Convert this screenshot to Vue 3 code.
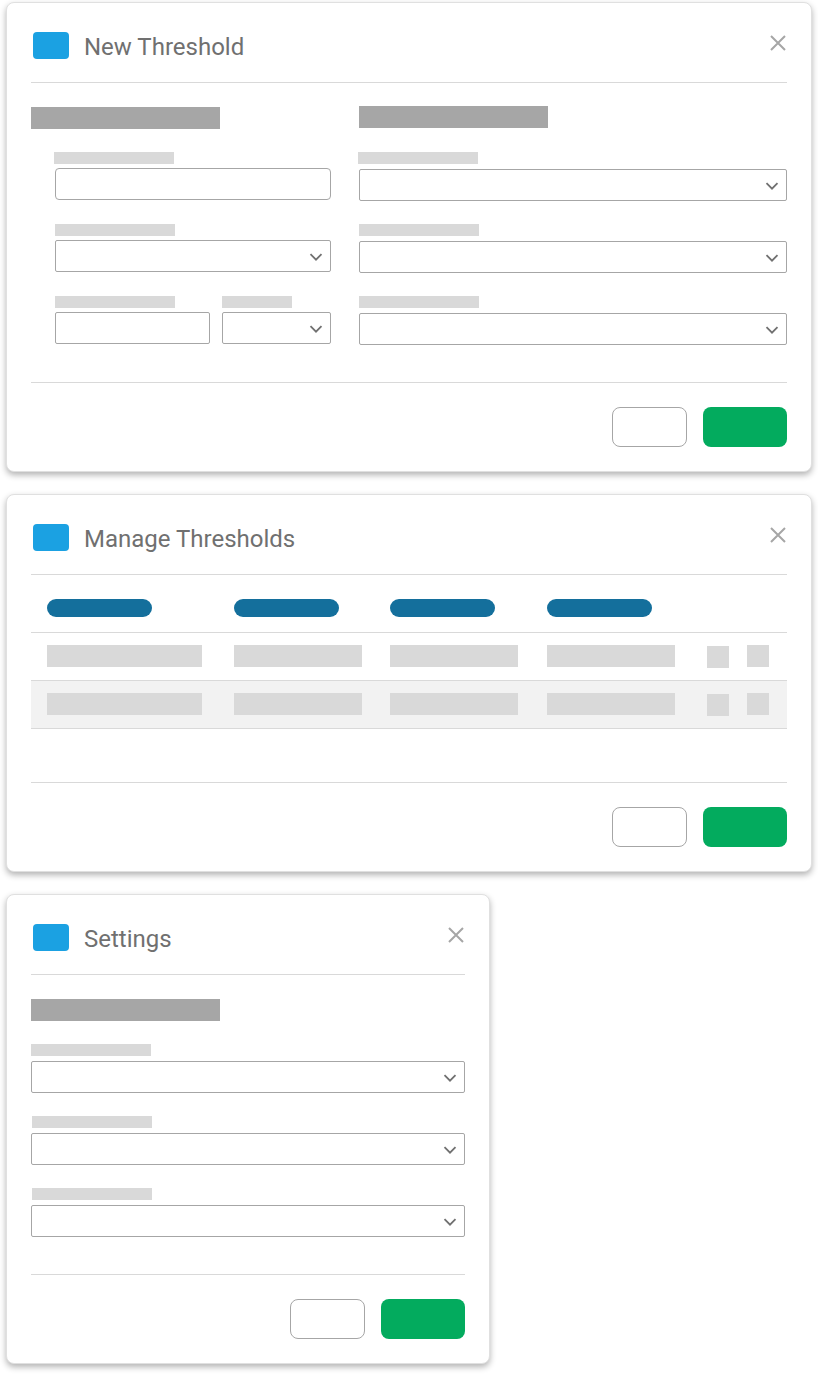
<script setup>
const columns = [
  { id: 'name', cell: 155 },
  { id: 'metric', cell: 128 },
  { id: 'limit', cell: 128 },
  { id: 'state', cell: 128 }
]
const rows = ['first', 'second']
const settingsFields = ['a', 'b', 'c']
const rightFields = ['a', 'b', 'c']
</script>

<template>
  <main class="page">
    <!-- new threshold -->
    <section class="card">
      <header class="head">
        <span class="logo"></span>
        <h2>New Threshold</h2>
        <svg class="close" width="16" height="16" viewBox="0 0 16 16"><path d="M1 1l14 14M15 1L1 15" /></svg>
      </header>

      <div class="form-body">
        <div class="col-left">
          <div class="heading"></div>
          <div class="left-fields">
            <div class="field">
              <div class="label shift"></div>
              <input class="box round" type="text">
            </div>
            <div class="field">
              <div class="label"></div>
              <div class="box select">
                <svg class="chev" width="14" height="8" viewBox="0 0 14 8"><path d="M1.5 1.2L7 6.7l5.5-5.5" /></svg>
              </div>
            </div>
            <div class="split">
              <div class="field grow">
                <div class="label"></div>
                <input class="box" type="text">
              </div>
              <div class="field small">
                <div class="label short"></div>
                <div class="box select">
                  <svg class="chev" width="14" height="8" viewBox="0 0 14 8"><path d="M1.5 1.2L7 6.7l5.5-5.5" /></svg>
                </div>
              </div>
            </div>
          </div>
        </div>

        <div class="col-right">
          <div class="heading"></div>
          <div v-for="(f, i) in rightFields" :key="f" class="wide-field">
            <div class="label" :class="{ shift: i === 0 }"></div>
            <div class="box select">
              <svg class="chev" width="14" height="8" viewBox="0 0 14 8"><path d="M1.5 1.2L7 6.7l5.5-5.5" /></svg>
            </div>
          </div>
        </div>
      </div>

      <footer class="foot">
        <button class="btn cancel"></button>
        <button class="btn ok"></button>
      </footer>
    </section>

    <!-- manage thresholds -->
    <section class="card">
      <header class="head">
        <span class="logo"></span>
        <h2>Manage Thresholds</h2>
        <svg class="close" width="16" height="16" viewBox="0 0 16 16"><path d="M1 1l14 14M15 1L1 15" /></svg>
      </header>

      <div class="table">
        <div class="tr th">
          <span v-for="c in columns" :key="c.id" class="pill"></span>
        </div>
        <div v-for="r in rows" :key="r" class="tr">
          <span v-for="c in columns" :key="c.id" class="cell" :style="{ width: c.cell + 'px' }"></span>
          <span class="sq low"></span>
          <span class="sq"></span>
        </div>
      </div>

      <footer class="foot">
        <button class="btn cancel"></button>
        <button class="btn ok"></button>
      </footer>
    </section>

    <!-- settings -->
    <section class="card narrow">
      <header class="head">
        <span class="logo"></span>
        <h2>Settings</h2>
        <svg class="close" width="16" height="16" viewBox="0 0 16 16"><path d="M1 1l14 14M15 1L1 15" /></svg>
      </header>

      <div class="settings-body">
        <div class="heading"></div>
        <div v-for="(f, i) in settingsFields" :key="f" class="wide-field">
          <div class="label" :class="{ push: i > 0 }"></div>
          <div class="box select">
            <svg class="chev" width="14" height="8" viewBox="0 0 14 8"><path d="M1.5 1.2L7 6.7l5.5-5.5" /></svg>
          </div>
        </div>
      </div>

      <footer class="foot">
        <button class="btn cancel"></button>
        <button class="btn ok"></button>
      </footer>
    </section>
  </main>
</template>

<style>
html,
body {
  margin: 0;
  background: #fff;
}
</style>

<style scoped>
.page {
  display: flex;
  flex-direction: column;
  align-items: flex-start;
  gap: 22px;
  width: 818px;
  height: 1374px;
  padding: 2px 0 0 6px;
  box-sizing: border-box;
  font-family: Roboto, "Liberation Sans", sans-serif;
  overflow: hidden;
}

.card {
  width: 806px;
  padding: 0 24px 24px;
  box-sizing: border-box;
  background: #fff;
  border: 1px solid #e0e0e0;
  border-radius: 8px;
  box-shadow: 0 3px 6px rgba(0, 0, 0, 0.3);
}

.narrow {
  width: 484px;
}

.head {
  display: flex;
  align-items: flex-start;
  height: 80px;
  box-sizing: border-box;
  padding-top: 29px;
  border-bottom: 1px solid #d9d9d9;
}

.logo {
  width: 36px;
  height: 27px;
  margin-left: 2px;
  border-radius: 4px;
  background: #1ba1e2;
}

.head h2 {
  flex: 1;
  margin: 0 0 0 15px;
  font-size: 24px;
  font-weight: 400;
  line-height: 30px;
  color: #707070;
}

.close {
  margin: 3px 1px 0 0;
}

.close path {
  fill: none;
  stroke: #a6a6a6;
  stroke-width: 2;
}

.heading {
  width: 189px;
  height: 22px;
  background: #a6a6a6;
}

.label {
  width: 120px;
  height: 12px;
  background: #d9d9d9;
}

.label.short {
  width: 70px;
}

.label.shift {
  margin-left: -1px;
}

.label.push {
  margin-left: 1px;
}

.box {
  display: block;
  width: 100%;
  height: 32px;
  padding: 0;
  box-sizing: border-box;
  background: #fff;
  border: 1px solid #a6a6a6;
  border-radius: 2px;
  outline: none;
}

.box.round {
  border-radius: 4px;
}

.select {
  display: flex;
  align-items: center;
  justify-content: flex-end;
  padding-right: 7px;
}

.chev {
  margin-top: 2px;
}

.chev path {
  fill: none;
  stroke: #707070;
  stroke-width: 1.8;
}

.form-body {
  display: grid;
  grid-template-columns: 300px 428px;
  gap: 28px;
  padding: 23px 0 37px;
}

.col-left {
  margin-top: 1px;
}

.left-fields {
  display: flex;
  flex-direction: column;
  gap: 24px;
  margin: 23px 0 0 24px;
}

.field .label {
  margin-bottom: 4px;
}

.split {
  display: flex;
  gap: 12px;
}

.field.grow {
  width: 155px;
}

.field.small {
  width: 109px;
}

.wide-field {
  margin-top: 23px;
}

.wide-field .label {
  margin-bottom: 5px;
}

.col-right .heading + .wide-field {
  margin-top: 24px;
}

.settings-body {
  padding: 24px 0 37px;
}

.foot {
  display: flex;
  justify-content: flex-end;
  gap: 16px;
  padding-top: 24px;
  border-top: 1px solid #d9d9d9;
}

.btn {
  height: 40px;
  padding: 0;
  border-radius: 8px;
  box-sizing: border-box;
}

.cancel {
  width: 75px;
  background: #fff;
  border: 1px solid #a6a6a6;
}

.ok {
  width: 84px;
  background: #03ab5e;
  border: 0;
}

.table {
  height: 207px;
}

.tr {
  display: grid;
  grid-template-columns: 187px 156px 157px 160px 40px 1fr;
  height: 48px;
  padding: 12px 0 0 16px;
  box-sizing: border-box;
  border-bottom: 1px solid #d9d9d9;
}

.tr.th {
  height: 58px;
  padding-top: 24px;
}

.tr:last-child {
  background: #f2f2f2;
}

.pill {
  width: 105px;
  height: 18px;
  border-radius: 9px;
  background: #146f9c;
}

.cell {
  height: 22px;
  background: #d9d9d9;
}

.sq {
  width: 22px;
  height: 22px;
  background: #d9d9d9;
}

.sq.low {
  margin-top: 1px;
}
</style>
